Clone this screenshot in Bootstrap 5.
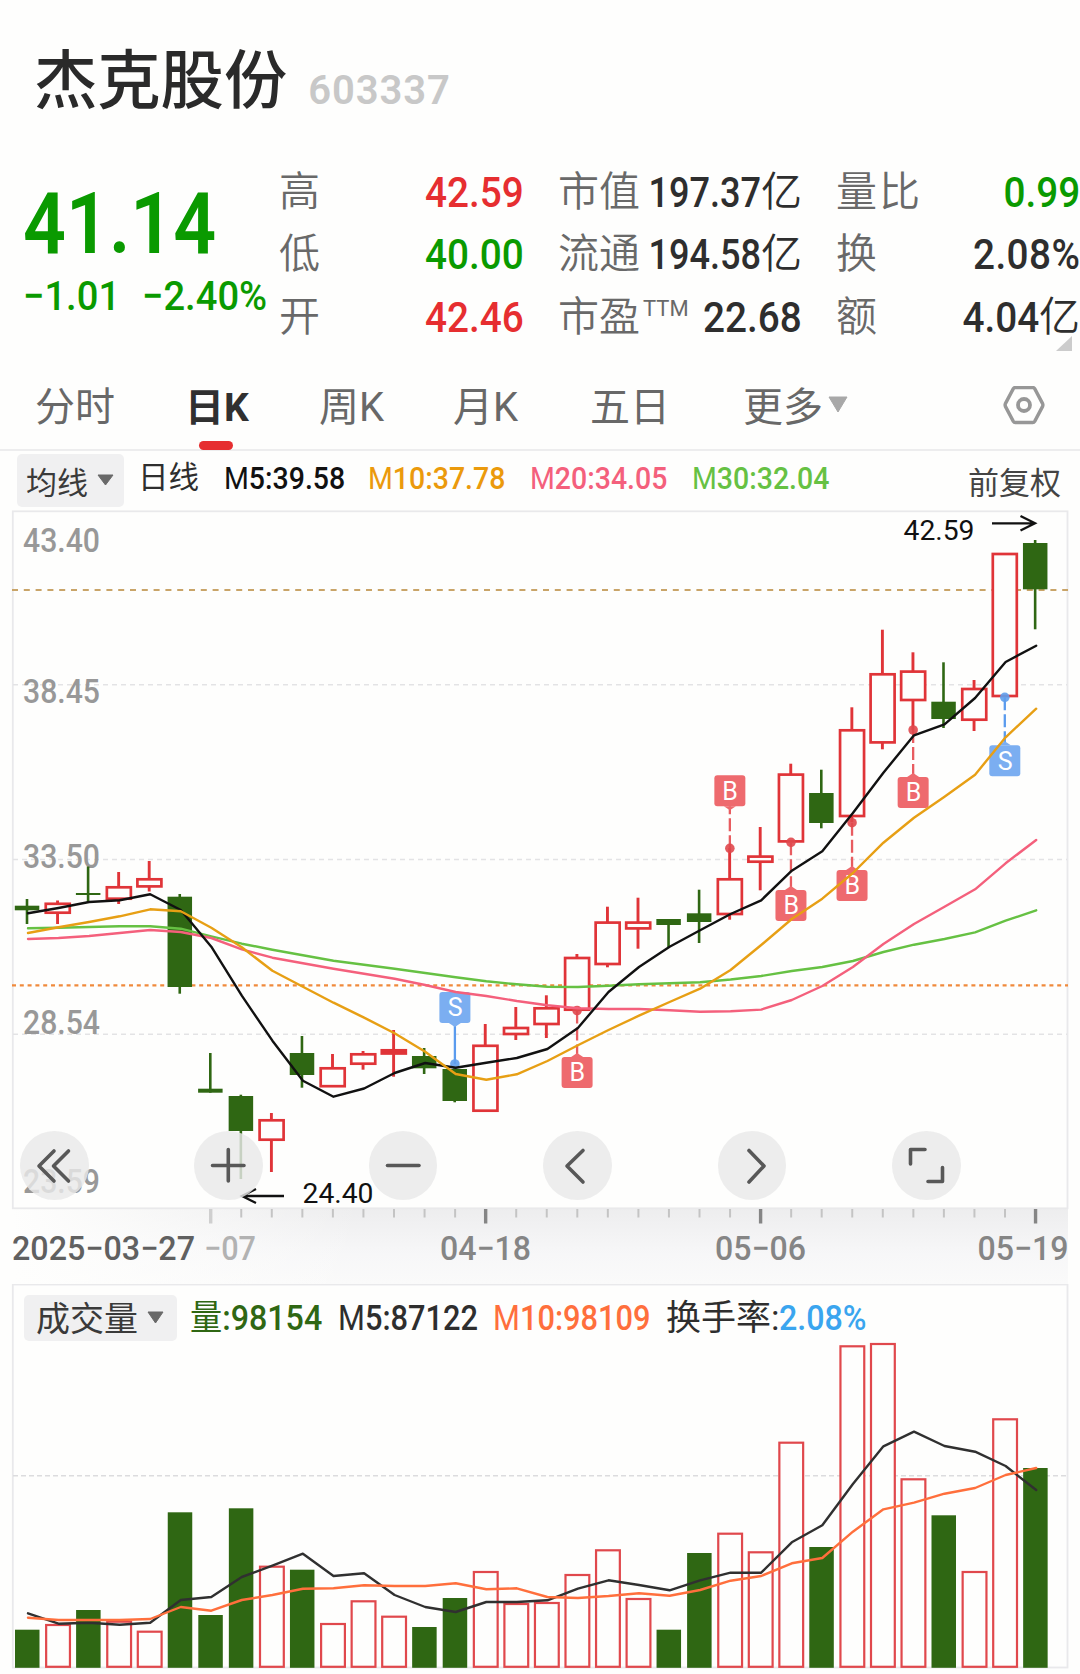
<!DOCTYPE html>
<html lang="zh-CN">
<head>
<meta charset="utf-8">
<meta name="viewport" content="width=device-width, initial-scale=1">
<title>杰克股份 603337</title>
<link href="https://cdn.jsdelivr.net/npm/bootstrap@5.3.0/dist/css/bootstrap.min.css" rel="stylesheet">
<style>
:root{--up:#e62e30;--down:#0a9a00;--ink:#2e2e2e;--muted:#696969}
body{width:1080px;height:1674px;overflow:hidden;background:#fefefd;color:var(--ink);font-family:Roboto,"Noto Sans CJK SC",sans-serif;line-height:1}
.c-up{color:var(--up)}.c-down{color:var(--down)}
.din{display:inline-block;transform:scaleX(.9);transform-origin:0 50%;white-space:nowrap;font-weight:500}
.din.end{transform-origin:100% 50%}
.head{height:150px;padding:51px 0 0 34px}
.stock-name{font-size:63.3px;font-weight:500;line-height:60px;color:#2a2a2a}
.stock-code{font-size:40px;font-weight:600;line-height:40px;letter-spacing:.9px;color:#c8c8c8;margin:20px 0 0 21px}
.quote{height:200px}
.price-col{width:280px;padding:33px 0 0 23px}
.price{font-size:84.5px;line-height:84px;font-weight:650;transform:scaleX(.89)}
.diff{font-size:41px;line-height:44px;margin-top:7px}
.diff .din:first-child{width:119px}
.diff .din{transform:scaleX(.93)}
.stat-col{padding-top:11px}
.stat{height:62.5px;font-size:41px;color:var(--muted);font-weight:350;white-space:nowrap}
.stat>span:first-child{margin-left:-1px}
.stat .din{font-size:43px;color:var(--ink)}
.stat .din.tight{transform:scaleX(.84)}
.stat .c-up{color:var(--up)}.stat .c-down{color:var(--down)}
.stat sup{font-size:22px;top:-8px;margin-left:3px;font-weight:400}
.yi{color:var(--ink)}
.w-a{width:244px;margin-right:35px}.w-b{width:243px;margin-right:35px}.w-c{width:243px}
.corner{right:8px;top:186px}
.tabs{display:grid;grid-template-columns:35px 150px 134px 134px 137px 153px 260px 1fr;height:101px;border-bottom:2px solid #ededee;font-size:40px;color:#686868}
.tabs>*{line-height:40px;padding-top:38px;white-space:nowrap}
.tabs>:last-child{padding-top:36px}
.tab-on{font-weight:700;font-size:39px;color:#303030;position:relative}
.tab-on::after{content:"";position:absolute;left:14px;top:91px;width:34px;height:9px;border-radius:5px;background:var(--up)}
.ma-row{display:grid;grid-template-columns:17px 121px 86px 144px 162px 162px 276px 1fr;height:59px}
.ma-row>*{padding-top:11px;line-height:32px;white-space:nowrap;font-size:32px}
.ma-row .din{transform:scaleX(.89)}
.thin{font-weight:400}
.pick{background:#f0f0f1;border-radius:5px;color:#3a3a3a;position:relative}
.pick svg{position:absolute}
.ma-row .pick{width:107px;height:53px;margin-top:3px;padding:14px 0 0 9px;font-size:31px}
.tools{left:20px;top:621px;gap:105.8px}
.tool{width:68.6px;height:68.6px;background:rgba(233,233,233,.82)}
.tool path{fill:none;stroke:#585858;stroke-width:3.6;stroke-linecap:round;stroke-linejoin:round}
.vol-row{display:grid;grid-template-columns:24px 166px 148px 155px 173px 1fr;left:0;right:0;top:11px}
.vol-row>*{font-size:35px;line-height:36px;padding-top:6px;white-space:nowrap}
.vol-row .pick{width:153px;height:46px;font-size:34px;padding:6px 0 0 12px}
.vol-row .din{transform:scaleX(.92)}
.vol-row .din.snug{transform:scaleX(.88)}
svg{display:block}
svg text{font-family:Roboto,"Noto Sans CJK SC",sans-serif}
</style>
<script src="https://cdn.jsdelivr.net/npm/bootstrap@5.3.0/dist/js/bootstrap.bundle.min.js"></script>
</head>
<body>
<header class="head d-flex align-items-start">
  <div class="stock-name">杰克股份</div><div class="stock-code">603337</div>
</header>

<section class="quote d-flex position-relative">
  <div class="price-col c-down flex-shrink-0">
    <div class="price din">41.14</div>
    <div class="diff text-nowrap"><span class="din">−1.01</span><span class="din">−2.40%</span></div>
  </div>
  <div class="stat-col w-a flex-shrink-0">
    <div class="stat d-flex align-items-center justify-content-between"><span>高</span><span class="din end c-up">42.59</span></div>
    <div class="stat d-flex align-items-center justify-content-between"><span>低</span><span class="din end c-down">40.00</span></div>
    <div class="stat d-flex align-items-center justify-content-between"><span>开</span><span class="din end c-up">42.46</span></div>
  </div>
  <div class="stat-col w-b flex-shrink-0">
    <div class="stat d-flex align-items-center justify-content-between"><span>市值</span><span class="d-flex justify-content-end align-items-center" style="width:120px"><span class="din end tight">197.37</span><span class="yi">亿</span></span></div>
    <div class="stat d-flex align-items-center justify-content-between"><span>流通</span><span class="d-flex justify-content-end align-items-center" style="width:120px"><span class="din end tight">194.58</span><span class="yi">亿</span></span></div>
    <div class="stat d-flex align-items-center"><span>市盈</span><sup>TTM</sup><span class="din end ms-auto">22.68</span></div>
  </div>
  <div class="stat-col w-c flex-shrink-0">
    <div class="stat d-flex align-items-center"><span style="letter-spacing:2px">量比</span><span class="din end c-down ms-auto">0.99</span></div>
    <div class="stat d-flex align-items-center"><span>换</span><span class="din end ms-auto" style="letter-spacing:.5px">2.08%</span></div>
    <div class="stat d-flex align-items-center"><span>额</span><span class="din end ms-auto">4.04</span><span class="yi">亿</span></div>
  </div>
  <svg class="corner position-absolute" width="16" height="15"><path d="M16 0V15H0Z" fill="#ccc"/></svg>
</section>

<nav class="tabs">
  <i></i><span>分时</span><span class="tab-on">日K</span><span>周K</span><span>月K</span><span>五日</span>
  <span class="d-flex">更多<svg class="ms-1" width="22" height="17" style="margin-top:8px"><path d="M2 1H20L11 16Z" fill="#a8a8a8" stroke="#a8a8a8" stroke-linejoin="round"/></svg></span>
  <span><svg width="42" height="40" viewBox="0 0 42 40"><path d="M12.2 1.5H29.8Q31 1.5 31.7 2.6L39.6 17.6Q40.2 19 39.6 20.4L31.7 35.4Q31 36.5 29.8 36.5H12.2Q11 36.5 10.3 35.4L2.4 20.4Q1.8 19 2.4 17.6L10.3 2.6Q11 1.5 12.2 1.5Z" fill="none" stroke="#979797" stroke-width="3.4"/><circle cx="21" cy="19" r="6" fill="none" stroke="#979797" stroke-width="3.8"/></svg></span>
</nav>

<div class="ma-row">
  <i></i><span class="pick">均线<svg style="left:80px;top:20px" width="17" height="12"><path d="M1 1H16L8.500 11Z" fill="#696969" stroke="#696969" stroke-linejoin="round"/></svg></span>
  <span style="font-size:30.5px">日线</span>
  <span><span class="din" style="color:#111"><span class="thin">M</span>5:39.58</span></span>
  <span><span class="din" style="color:#eb9a0c"><span class="thin">M</span>10:37.78</span></span>
  <span><span class="din" style="color:#f4607c"><span class="thin">M</span>20:34.05</span></span>
  <span><span class="din" style="color:#66c143"><span class="thin">M</span>30:32.04</span></span>
  <span style="font-size:31px;padding-top:17px;color:#444">前复权</span>
</div>

<section class="position-relative">
  <svg id="kline" width="1080" height="774" viewBox="0 510 1080 774"></svg>
  <div class="tools position-absolute d-flex">
    <div class="tool rounded-circle"><svg viewBox="0 0 68.600 68.600"><path d="M34 20L19 35L34 50M48.500 20L33.500 35L48.500 50"/></svg></div>
    <div class="tool rounded-circle"><svg viewBox="0 0 68.600 68.600"><path d="M34.300 18.500V50M18.500 34.500H50"/></svg></div>
    <div class="tool rounded-circle"><svg viewBox="0 0 68.600 68.600"><path d="M18.500 34.500H50"/></svg></div>
    <div class="tool rounded-circle"><svg viewBox="0 0 68.600 68.600"><path d="M40 19.500L24 35L40 51"/></svg></div>
    <div class="tool rounded-circle"><svg viewBox="0 0 68.600 68.600"><path d="M31 19.500L46 35L31 51"/></svg></div>
    <div class="tool rounded-circle"><svg viewBox="0 0 68.600 68.600"><path d="M18.500 33V18.500H33M50.500 36.500V50.500H36"/></svg></div>
  </div>
</section>

<section class="position-relative">
  <svg id="volume" width="1080" height="390" viewBox="0 1284 1080 390"></svg>
  <div class="vol-row position-absolute">
    <i></i><span class="pick">成交量<svg style="left:123px;top:16px" width="17" height="13"><path d="M1 1H16L8.500 12Z" fill="#696969" stroke="#696969" stroke-linejoin="round"/></svg></span>
    <span style="color:#2f6713"><span class="din"><span class="thin">量</span>:98154</span></span>
    <span><span class="din snug"><span class="thin">M</span>5:87122</span></span>
    <span><span class="din snug" style="color:#ff6f3c"><span class="thin">M</span>10:98109</span></span>
    <span>换手率:<span class="din" style="color:#3aa5ef">2.08%</span></span>
  </div>
</section>

<script>
const UP='#e03438', DOWN='#2f6713';
const X=i=>27+i*30.55;
// [type, body top, body bottom, wick top, wick bottom, volume top]
const days=[
['g',905.7,910.3,899,924,1629.7],['r',902.5,914,900.5,924,1624],['g',893,895,866.5,902,1610],['r',886,900,872,904,1620.7],
['r',878,887.7,861,891.5,1630.7],['g',896.7,987,894,993.7,1512.3],['g',1088.7,1092.7,1053,1092.7,1615],['g',1096,1131,1094.7,1179,1508.3],
['r',1119,1141,1113,1172,1565.7],['g',1053,1075,1036,1087.7,1569.7],['r',1067,1087.5,1054,1087.5,1623],['r',1053,1065,1051,1069.7,1600.3],
['r',1049,1054.8,1030,1076.7,1615.7],['g',1056,1068.3,1048,1074,1627],['g',1069,1101,1067,1102.3,1598],['r',1044.5,1112,1024,1112,1571],
['r',1026.7,1035.3,1007,1040,1603],['r',1007,1025.3,995.3,1038,1602],['r',956.7,1011,954,1011,1574],['r',921.3,965.3,906.7,967.3,1549.3],
['r',921.3,929.7,897.7,948.7,1598],['g',919,925,919,947.3,1629.7],['g',913.3,922,889.7,943,1553],['r',878,915.3,848,919.7,1532.7],
['r',855.3,863,827,890.3,1551.3],['r',773.3,842.7,763.7,842.7,1441.7],['g',793,823,769.7,828.3,1547],['r',729,817.3,707.3,822,1345.3],
['r',673,743.7,629.7,749.3,1343],['r',670.3,701.3,652.3,730,1478.3],['g',701.7,719,662.3,728,1515.3],['r',687.7,721,680,731,1571],
['r',552.7,697.3,552.7,697.3,1418.3],['g',543,589.3,540,629.3,1468]];
const ma={
m30:['#66c143',928.3,927.7,927,926.3,926.3,928.7,936.3,943.7,949.7,955.3,960.7,964.7,968.7,973,977.3,981.3,984.3,986.7,987,985.7,984.3,983.3,982.3,979.5,976,971,967,961,952,944.7,939,932.3,920.7,910.3],
m20:['#f4607c',939,938,936,933,930,932,938,949.3,957.7,963.3,968.7,973.7,978.7,985,992,996,1001,1005.3,1008.3,1009,1009,1010.3,1011.7,1011.3,1009.6,1000,986,967,944,924,906.7,889.3,863.3,840],
m5:['#111',913.3,908,902,900.3,894.3,910,946.7,995.7,1040.7,1080.7,1096.7,1088.5,1073,1063,1067.7,1062.7,1058,1049,1028,992,967,946.7,930.3,914,900.3,870.7,851.3,813,772.7,735.3,724.3,698,662,645.7],
m10:['#e79f14',933,927.3,922,916.3,909.3,911.3,927.7,947.3,970.7,986.7,1002.7,1017.7,1033.3,1051.7,1074,1079.7,1074.3,1061,1045.3,1030,1015.7,1002,988.7,970,945,919,898.7,873,842.7,817.7,796.7,774.7,737.3,708.7]};
const vma={
v5:['#303030',1613.3,1623.7,1622.7,1624.7,1622.7,1600,1597,1577,1565.7,1553.7,1576,1573.3,1595,1607,1612,1602,1602,1600.3,1588.7,1580.3,1585,1590.3,1580.3,1572.7,1572.7,1542.3,1525.3,1484,1446.3,1431.7,1446,1451.7,1466,1490],
v10:['#ff6f3c',1617.7,1620,1620,1620,1619,1607,1610.7,1600,1595,1588.7,1588.3,1585.3,1586,1586,1583.3,1589.3,1588.3,1597,1598,1596,1593.3,1595.7,1590,1580.7,1576,1563.3,1558,1531.7,1509.3,1502.7,1493.7,1488,1475,1468]};
// [day, letter, box top, dot y]
const marks=[[14,'S',992,1064],[18,'B',1057,1010.5],[23,'B',775.3,848.3],[25,'B',890,842.3],[27,'B',870,822.700],[29,'B',777,730],[32,'S',745.3,697.3]];

const line=(x1,y1,x2,y2,c,w,d)=>`<line x1="${x1}" y1="${y1}" x2="${x2}" y2="${y2}" stroke="${c}" stroke-width="${w}"${d?` stroke-dasharray="${d}"`:''}/>`;
const label=(x,y,t,w,c,s,fw)=>`<text x="${x}" y="${y}" font-size="${s||34}" font-weight="${fw||500}" fill="${c}" textLength="${w}" lengthAdjust="spacingAndGlyphs">${t}</text>`;
const path=a=>`<polyline fill="none" stroke="${a[0]}" stroke-width="2.4" stroke-linejoin="round" stroke-linecap="round" points="${a.slice(1).map((y,i)=>(X(i)+1).toFixed(1)+','+y).join(' ')}"/>`;

let k=`<defs><linearGradient id="ax" x2="0" y2="1"><stop stop-color="#ededee"/><stop offset=".6" stop-color="#f7f7f8"/><stop offset="1" stop-color="#fafafa"/></linearGradient>
<linearGradient id="fade"><stop stop-color="#fefefd"/><stop offset="1" stop-color="#fefefd" stop-opacity="0"/></linearGradient></defs>
<rect x="12" y="1208" width="1056" height="76" fill="url(#ax)"/><rect x="12" y="1209" width="350" height="75" fill="url(#fade)"/>
<rect x="12.800" y="511.300" width="1054.700" height="697" fill="#fefefd" stroke="#e9e9eb" stroke-width="1.800"/>`;
[684.7,859.5,1034.3].forEach(y=>k+=line(13,y,1067,y,'#e3e3e5',1.5,'5 4'));
k+=line(12,590,1068,590,'#c9a468',1.8,'6 5.800')+line(12,985.300,1068,985.300,'#f08a3c',2.2,'4 3.800');
[['43.40',551.7],['38.45',702.5],['33.50',867.7],['28.54',1034],['23.59',1192.7]].forEach(a=>k+=label(23,a[1],a[0],77,'#989898'));
days.forEach((d,i)=>{const x=X(i),c=d[0]=='g'?DOWN:UP;
 if(d[0]=='g')k+=line(x,d[3],x,d[4],c,2.6)+`<rect x="${x-12.2}" y="${d[1]}" width="24.5" height="${d[2]-d[1]}" fill="${c}"/>`;
 else k+=(d[3]<d[1]?line(x,d[3],x,d[1]+1,c,2.9):'')+(d[4]>d[2]?line(x,d[2]-1,x,d[4],c,2.9):'')+`<rect x="${x-11.8}" y="${d[1]+1.3}" width="24" height="${d[2]-d[1]-2.6}" fill="${d[2]-d[1]<7?c:'#fefefd'}" stroke="${c}" stroke-width="2.7"/>`;});
marks.forEach(m=>{const x=X(m[0])+.2,up=m[2]<m[3],c=m[1]=='S'?'#7baef1':'#ee6a6e',e=up?m[2]+31:m[2];
 k+=line(x,m[3],x,e,m[1]=='S'?'#5a9bee':'#e85c60',2.3,m[0]==14?'':'13 4')+`<circle cx="${x}" cy="${m[3]}" r="4.800" fill="${m[1]=='S'?'#5f9fec':'#e0484c'}" opacity=".9"/><path d="M${x-6} ${e}L${x} ${e+(up?4:-4)}L${x+6} ${e}Z" fill="${c}"/><rect x="${x-15.5}" y="${m[2]}" width="31" height="31" rx="3" fill="${c}"/><text x="${x+.3}" y="${m[2]+24.3}" font-size="25" fill="#fff" text-anchor="middle">${m[1]}</text>`;});
for(const n in ma)k+=path(ma[n]);
k+=`<g fill="none" stroke="#111" stroke-width="2.300"><path d="M284 1196H242M256 1189L242 1196L256 1203"/><path d="M992 523.300H1035M1020.500 516L1035 523.300L1020.500 530.500"/></g>`;
k+=label(302.500,1202.500,'24.40',71,'#111',28,400)+label(903.500,540,'42.59',71,'#111',28,400);
for(let i=6;i<34;i++){const big=[6,15,24,33].includes(i);k+=line(X(i)+.4,1209,X(i)+.4,big?1223.5:1217.5,big?(i==6?'#cfcfcf':'#858585'):'#c4c4c4',big?3.4:2);}
k+=label(12,1260,'2025−03−27',183,'#606060')+label(204,1260,'−07',52,'#b2b2b2')+label(440,1260,'04−18',91,'#858585')+label(715,1260,'05−06',91,'#858585')+label(977.500,1260,'05−19',91,'#858585');
document.getElementById('kline').innerHTML=k;

let v=`<rect x="12.800" y="1284.500" width="1054.700" height="383" fill="#fefefd" stroke="#e9e9eb" stroke-width="1.800"/>`+line(13,1475.7,1067,1475.7,'#dcdcde',1.4,'5 3');
days.forEach((d,i)=>{const x=X(i);v+=d[0]=='g'?`<rect x="${x-12}" y="${d[5]}" width="24.5" height="${1667.800-d[5]}" fill="${DOWN}"/>`:`<rect x="${x-11.400}" y="${d[5]+1}" width="23.800" height="${1666.800-d[5]-1}" fill="#fefefd" stroke="#e0484c" stroke-width="2.200"/>`;});
for(const n in vma)v+=path(vma[n]);
document.getElementById('volume').innerHTML=v;
</script>
</body>
</html>
